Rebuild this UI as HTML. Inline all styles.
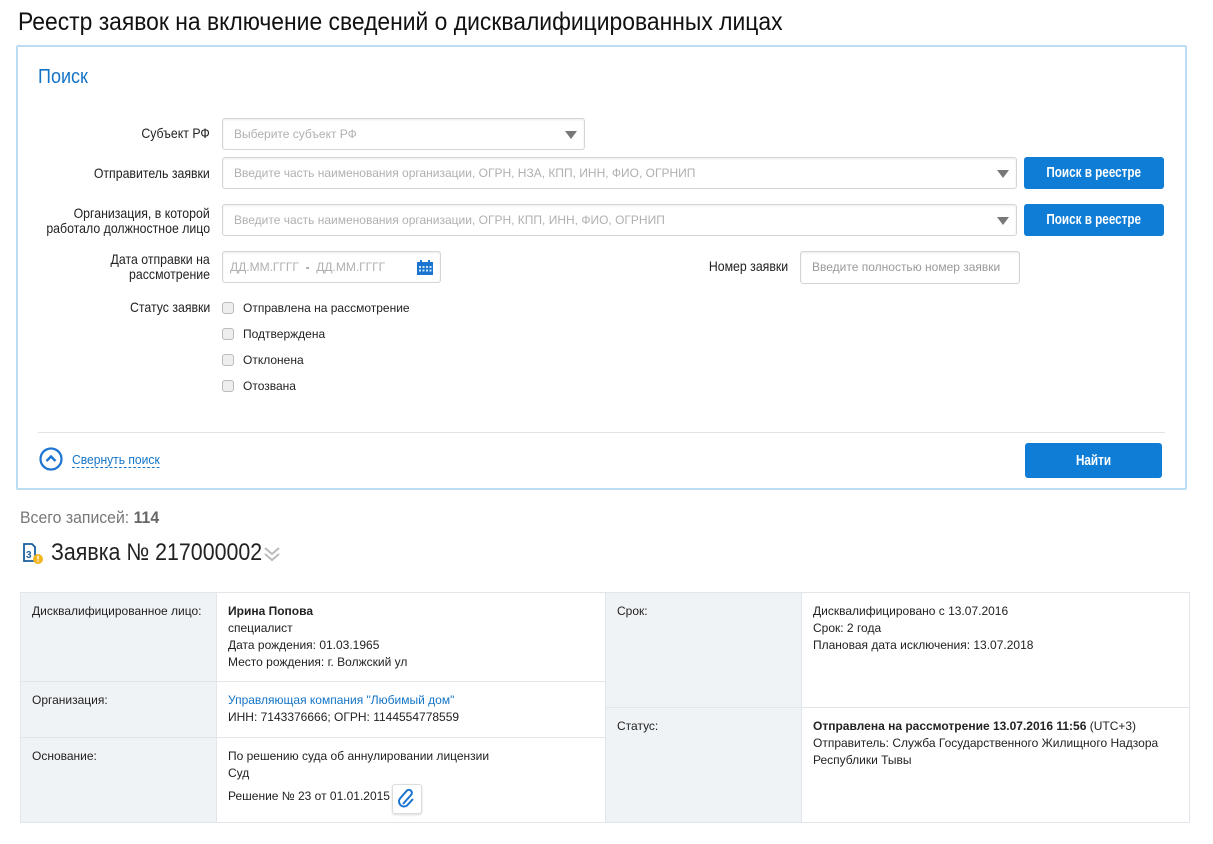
<!DOCTYPE html>
<html><head><meta charset="utf-8"><style>
*{box-sizing:border-box;margin:0;padding:0}
body{width:1213px;height:844px;background:#fff;position:relative;overflow:hidden;font-family:"Liberation Sans",Arial,sans-serif;color:#222}
.a{position:absolute}
.s{display:inline-block;transform:scaleX(.88);transform-origin:left center;white-space:nowrap}
.sr{display:inline-block;transform:scaleX(.88);transform-origin:right center;white-space:nowrap}
.lbl{position:absolute;font-size:14px;text-align:right;width:200px;line-height:15px;color:#222}
.inp{position:absolute;border:1px solid #d5d5d5;border-radius:3px;background:#fff;box-shadow:inset 0 1px 2px rgba(0,0,0,.08);font-size:12px;color:#b0b0b0;padding-left:11px;line-height:30px;white-space:nowrap}
.arr{position:absolute;right:7px;top:12px;width:0;height:0;border-left:6px solid transparent;border-right:6px solid transparent;border-top:8px solid #777}
.btn{position:absolute;background:#0f7dd6;color:#fff;border-radius:3px;font-size:15px;text-align:center;font-weight:bold}
.btn .s{transform-origin:center;transform:scaleX(.78)}
.cb{position:absolute;left:222px;width:12px;height:12px;border:1px solid #bbb;border-radius:3px;background:#eee}
.cbl{position:absolute;left:243px;font-size:12px;color:#222}
.cell{position:absolute;font-size:12px;line-height:17px;padding:10px 11px;border:1px solid #e2e6ea}
.g{background:#f0f3f6}
</style></head><body>
<div class="a" style="left:18px;top:8px;font-size:25px;color:#111"><span class="s" style="transform:scaleX(.915)">Реестр заявок на включение сведений о дисквалифицированных лицах</span></div>
<div class="a" style="left:16px;top:45px;width:1171px;height:445px;border:2px solid #bcdcf2;border-radius:2px"></div>
<div class="a" style="left:38px;top:66px;font-size:20px;color:#1474c6"><span class="s" style="transform:scaleX(.9)">Поиск</span></div>

<div class="lbl" style="left:10px;top:126px"><span class="sr">Субъект РФ</span></div>
<div class="inp" style="left:222px;top:118px;width:363px;height:32px">Выберите субъект РФ<div class="arr"></div></div>

<div class="lbl" style="left:10px;top:166px"><span class="sr">Отправитель заявки</span></div>
<div class="inp" style="left:222px;top:157px;width:795px;height:32px">Введите часть наименования организации, ОГРН, НЗА, КПП, ИНН, ФИО, ОГРНИП<div class="arr"></div></div>
<div class="btn" style="left:1024px;top:157px;width:140px;height:32px;line-height:32px"><span class="s">Поиск в реестре</span></div>

<div class="lbl" style="left:10px;top:206px"><span class="sr">Организация, в которой</span><br><span class="sr">работало должностное лицо</span></div>
<div class="inp" style="left:222px;top:204px;width:795px;height:32px">Введите часть наименования организации, ОГРН, КПП, ИНН, ФИО, ОГРНИП<div class="arr"></div></div>
<div class="btn" style="left:1024px;top:204px;width:140px;height:32px;line-height:32px"><span class="s">Поиск в реестре</span></div>

<div class="lbl" style="left:10px;top:252px"><span class="sr">Дата отправки на</span><br><span class="sr">рассмотрение</span></div>
<div class="inp" style="left:222px;top:251px;width:219px;height:32px;padding-left:7px">ДД.ММ.ГГГГ &nbsp;<span style="color:#555">-</span>&nbsp; ДД.ММ.ГГГГ
<svg class="a" style="left:194px;top:8px" width="16" height="15" viewBox="0 0 16 15"><rect x="0" y="2" width="16" height="13" fill="#1a74d0"/><rect x="3" y="0" width="2" height="4" fill="#1a74d0"/><rect x="11" y="0" width="2" height="4" fill="#1a74d0"/><g fill="#cfe3f7"><rect x="2" y="6" width="2" height="2"/><rect x="5.5" y="6" width="2" height="2"/><rect x="9" y="6" width="2" height="2"/><rect x="12.5" y="6" width="2" height="2"/><rect x="2" y="9.5" width="2" height="2"/><rect x="5.5" y="9.5" width="2" height="2"/><rect x="9" y="9.5" width="2" height="2"/><rect x="12.5" y="9.5" width="2" height="2"/></g></svg></div>

<div class="lbl" style="left:588px;top:259px"><span class="sr">Номер заявки</span></div>
<div class="inp" style="left:800px;top:251px;width:220px;height:33px;color:#999">Введите полностью номер заявки</div>

<div class="lbl" style="left:10px;top:300px"><span class="sr">Статус заявки</span></div>
<div class="cb" style="top:302px"></div><div class="cbl" style="top:301px">Отправлена на рассмотрение</div>
<div class="cb" style="top:328px"></div><div class="cbl" style="top:327px">Подтверждена</div>
<div class="cb" style="top:354px"></div><div class="cbl" style="top:353px">Отклонена</div>
<div class="cb" style="top:380px"></div><div class="cbl" style="top:379px">Отозвана</div>

<div class="a" style="left:38px;top:432px;width:1127px;height:1px;background:#e3e3e3"></div>
<svg class="a" style="left:39px;top:447px" width="24" height="24" viewBox="0 0 24 24"><circle cx="12" cy="12" r="10.5" fill="none" stroke="#1a74d0" stroke-width="2.2"/><path d="M7.5 14 L12 9.5 L16.5 14" fill="none" stroke="#1a74d0" stroke-width="2.4"/></svg>
<div class="a" style="left:72px;top:452px;font-size:13px;color:#1474c6;line-height:15px"><span class="s" style="border-bottom:1px dashed #1474c6;transform:scaleX(.93)">Свернуть поиск</span></div>
<div class="btn" style="left:1025px;top:443px;width:137px;height:35px;line-height:35px"><span class="s">Найти</span></div>

<div class="a" style="left:20px;top:508px;font-size:17px;color:#777"><span class="s" style="transform:scaleX(.93)">Всего записей: <b style="color:#666">114</b></span></div>
<svg class="a" style="left:20px;top:542px" width="26" height="24" viewBox="0 0 26 24"><path d="M4 2 H12 L15 5 V19 H4 Z" fill="none" stroke="#1a5f9c" stroke-width="1.8"/><text x="6" y="16" font-family="Liberation Sans" font-size="10" font-weight="bold" fill="#1a5f9c">3</text><circle cx="18" cy="17" r="5" fill="#f2b51c"/><rect x="17.3" y="13.8" width="1.4" height="3.6" fill="#fff"/><rect x="17.3" y="18.4" width="1.4" height="1.4" fill="#fff"/></svg>
<div class="a" style="left:51px;top:539px;font-size:24px;color:#222"><span class="s" style="transform:scaleX(.89)">Заявка № 217000002</span></div>
<svg class="a" style="left:262px;top:545px" width="20" height="18" viewBox="0 0 20 18"><path d="M3 3 L10 9 L17 3 M3 9 L10 15 L17 9" fill="none" stroke="#bbb" stroke-width="2"/></svg>

<div class="cell g" style="left:20px;top:592px;width:197px;height:90px">Дисквалифицированное лицо:</div>
<div class="cell" style="left:216px;top:592px;width:390px;height:90px"><b>Ирина Попова</b><br>специалист<br>Дата рождения: 01.03.1965<br>Место рождения: г. Волжский ул</div>
<div class="cell g" style="left:20px;top:681px;width:197px;height:57px">Организация:</div>
<div class="cell" style="left:216px;top:681px;width:390px;height:57px"><span style="color:#1474c6">Управляющая компания "Любимый дом"</span><br>ИНН: 7143376666; ОГРН: 1144554778559</div>
<div class="cell g" style="left:20px;top:737px;width:197px;height:86px">Основание:</div>
<div class="cell" style="left:216px;top:737px;width:390px;height:86px">По решению суда об аннулировании лицензии<br>Суд<br><span style="position:relative;top:6px">Решение № 23 от 01.01.2015</span>
<div class="a" style="left:175px;top:46px;width:30px;height:30px;border:1px solid #ddd;border-radius:3px;background:#fff;box-shadow:0 1px 2px rgba(0,0,0,.15)"><svg width="28" height="28" viewBox="0 0 28 28"><path d="M10 19 L18 10 a3 3 0 0 0 -4.3 -4.2 L7 13.5 a5 5 0 0 0 7 7 L20 14" fill="none" stroke="#1a74d0" stroke-width="2"/></svg></div></div>

<div class="cell g" style="left:605px;top:592px;width:197px;height:116px">Срок:</div>
<div class="cell" style="left:801px;top:592px;width:389px;height:116px">Дисквалифицировано с 13.07.2016<br>Срок: 2 года<br>Плановая дата исключения: 13.07.2018</div>
<div class="cell g" style="left:605px;top:707px;width:197px;height:116px">Статус:</div>
<div class="cell" style="left:801px;top:707px;width:389px;height:116px"><b>Отправлена на рассмотрение 13.07.2016 11:56</b> (UTC+3)<br>Отправитель: Служба Государственного Жилищного Надзора Республики Тывы</div>
</body></html>
